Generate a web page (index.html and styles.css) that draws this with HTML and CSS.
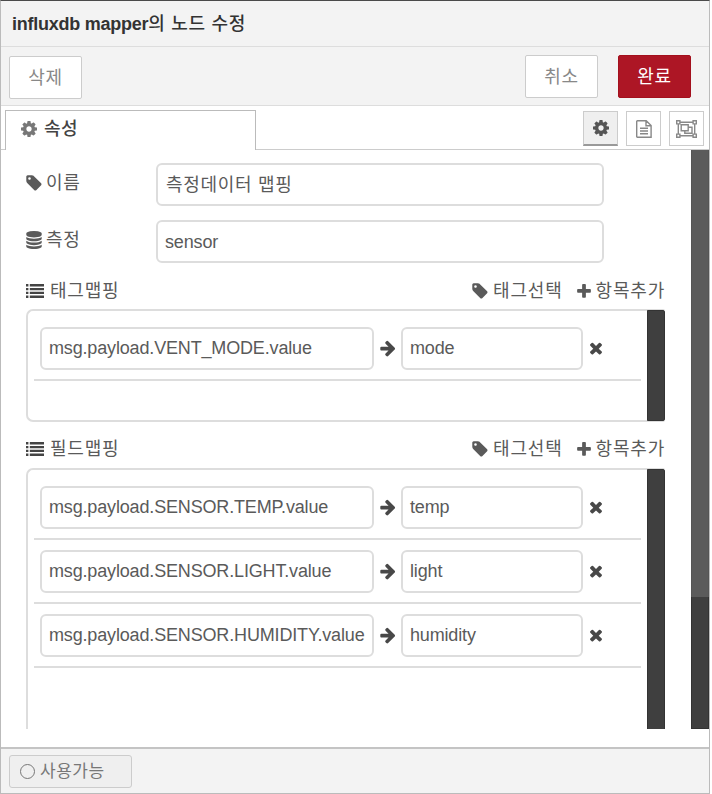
FILE: index.html
```
<!DOCTYPE html>
<html lang="ko">
<head>
<meta charset="utf-8">
<title>influxdb mapper</title>
<link rel="stylesheet" href="styles.css">
</head>
<body>
<svg class="defs" aria-hidden="true">
<symbol id="tag" viewBox="0 0 1792 1792"><path d="M576 448q0-53-37.500-90.500t-90.500-37.500-90.500 37.500-37.500 90.500 37.500 90.500 90.500 37.500 90.500-37.500 37.500-90.500zm1067 576q0 53-37 90l-491 492q-39 37-91 37-53 0-90-37l-715-716q-38-37-64.500-101t-26.500-117v-416q0-52 38-90t90-38h416q53 0 117 26.500t102 64.500l715 714q37 39 37 91z"/></symbol>
<symbol id="database" viewBox="128 0 1536 1792"><path d="M896 768q237 0 443-43t325-127v170q0 69-103 128t-280 93.500-385 34.500-385-34.500-280-93.500-103-128v-170q119 84 325 127t443 43zm0 768q237 0 443-43t325-127v170q0 69-103 128t-280 93.500-385 34.500-385-34.500-280-93.500-103-128v-170q119 84 325 127t443 43zm0-384q237 0 443-43t325-127v170q0 69-103 128t-280 93.500-385 34.500-385-34.500-280-93.500-103-128v-170q119 84 325 127t443 43zm0-1152q208 0 385 34.500t280 93.500 103 128v128q0 69-103 128t-280 93.500-385 34.500-385-34.500-280-93.500-103-128v-128q0-69 103-128t280-93.500 385-34.500z"/></symbol>
<symbol id="cog" viewBox="128 128 1536 1536"><path d="M1152 896q0-106-75-181t-181-75-181 75-75 181 75 181 181 75 181-75 75-181zm512-109v222q0 12-8 23t-20 13l-185 28q-19 54-39 91 35 50 107 138 10 12 10 25t-9 23q-27 37-99 108t-94 71q-12 0-26-9l-138-108q-44 23-91 38-16 136-29 186-7 28-36 28h-222q-14 0-24.500-8.500t-11.500-21.500l-28-184q-49-16-90-37l-141 107q-10 9-25 9-14 0-25-11-126-114-165-168-7-10-7-23 0-12 8-23 15-21 51-66.500t54-70.500q-27-50-41-99l-183-27q-13-2-21-12.500t-8-23.500v-222q0-12 8-23t19-13l186-28q14-46 39-92-40-57-107-138-10-12-10-24 0-10 9-23 26-36 98.500-107.500t94.500-71.500q13 0 26 10l138 107q44-23 91-38 16-136 29-186 7-28 36-28h222q14 0 24.500 8.500t11.500 21.500l28 184q49 16 90 37l142-107q9-9 24-9 13 0 25 10 129 119 165 170 7 8 7 22 0 12-8 23-15 21-51 66.500t-54 70.500q26 50 41 98l183 28q13 2 21 12.500t8 23.500z"/></symbol>
<symbol id="arrow" viewBox="0 0 1792 1792"><path d="M1600 960q0 54-37 91l-651 651q-39 37-91 37-51 0-90-37l-75-75q-38-38-38-91t38-91l293-293h-704q-52 0-84.500-37.500t-32.500-90.500v-128q0-53 32.500-90.500t84.500-37.500h704l-293-294q-38-36-38-90t38-90l75-75q38-38 90-38 53 0 91 38l651 651q37 35 37 90z"/></symbol>
<symbol id="times" viewBox="0 0 1792 1792"><path d="M1490 1322q0 40-28 68l-136 136q-28 28-68 28t-68-28l-294-294-294 294q-28 28-68 28t-68-28l-136-136q-28-28-28-68t28-68l294-294-294-294q-28-28-28-68t28-68l136-136q28-28 68-28t68 28l294 294 294-294q28-28 68-28t68 28l136 136q28 28 28 68t-28 68l-294 294 294 294q28 28 28 68z"/></symbol>
<symbol id="plus" viewBox="192 128 1408 1536"><path d="M1600 736v192q0 40-28 68t-68 28h-416v416q0 40-28 68t-68 28h-192q-40 0-68-28t-28-68v-416h-416q-40 0-68-28t-28-68v-192q0-40 28-68t68-28h416v-416q0-40 28-68t68-28h192q40 0 68 28t28 68v416h416q40 0 68 28t28 68z"/></symbol>
<symbol id="list" viewBox="0 0 18 14"><path d="M0 0h2.400v2.400H0zM0 3.900h2.400v2.400H0zM0 7.700h2.400v2.400H0zM0 11.500h2.400v2.400H0zM3.800 0H18v2.400H3.800zM3.800 3.900H18v2.400H3.800zM3.800 7.700H18v2.400H3.800zM3.800 11.500H18v2.400H3.800z"/></symbol>
<symbol id="doc" viewBox="0 0 16 18"><path d="M1.400.7h8.800l4.900 4.900v11.600H1.400a.7.7 0 0 1-.7-.7V1.400a.7.7 0 0 1 .7-.7zM10 .7v5h5M4 8.300h8M4 11h8M4 13.700h8" fill="none" stroke="currentColor" stroke-width="1.400"/></symbol>
<symbol id="group" viewBox="0 0 21 18"><g fill="none" stroke="currentColor" stroke-width="1.400"><path d="M4 2.300h13M4 15.700h13M2.300 4v10M18.700 4v10M.7.7h3.200v3.200H.7zM17.100.7h3.200v3.200h-3.200zM.7 14.100h3.200v3.200H.7zM17.100 14.100h3.200v3.200h-3.200zM5.200 4.700h7v6h-7zM12.200 7.300h3.800v6H8.800v-2.600"/></g></symbol>
</svg>
<div class="editor">
  <header class="title"><b>influxdb mapper</b><span>의 노드 수정</span></header>
  <div class="toolbar">
    <button class="btn delete">삭제</button>
    <button class="btn cancel">취소</button>
    <button class="btn primary">완료</button>
  </div>
  <nav class="tabs">
    <div class="tab"><svg class="cog"><use href="#cog"/></svg><span>속성</span></div>
    <div class="tools">
      <button class="tool active"><svg class="cog"><use href="#cog"/></svg></button>
      <button class="tool"><svg class="doc"><use href="#doc"/></svg></button>
      <button class="tool"><svg class="group"><use href="#group"/></svg></button>
    </div>
  </nav>
  <main class="body">
    <div class="form">
      <div class="row"><label><svg class="tag"><use href="#tag"/></svg>이름</label><div class="input name">측정데이터 맵핑</div></div>
      <div class="row"><label><svg class="db"><use href="#database"/></svg>측정</label><div class="input">sensor</div></div>
      <div class="section">
        <svg class="list-icon"><use href="#list"/></svg><span>태그맵핑</span>
        <a class="pick"><svg class="tag"><use href="#tag"/></svg>태그선택</a>
        <a><svg class="plus"><use href="#plus"/></svg>항목추가</a>
      </div>
      <div class="list tags">
        <div class="items">
          <div class="item"><div class="input key">msg.payload.VENT_MODE.value</div><svg class="arrow"><use href="#arrow"/></svg><div class="input val">mode</div><svg class="times"><use href="#times"/></svg></div>
        </div>
        <div class="track"></div>
      </div>
      <div class="section second">
        <svg class="list-icon"><use href="#list"/></svg><span>필드맵핑</span>
        <a class="pick"><svg class="tag"><use href="#tag"/></svg>태그선택</a>
        <a><svg class="plus"><use href="#plus"/></svg>항목추가</a>
      </div>
      <div class="list fields">
        <div class="items">
          <div class="item"><div class="input key">msg.payload.SENSOR.TEMP.value</div><svg class="arrow"><use href="#arrow"/></svg><div class="input val">temp</div><svg class="times"><use href="#times"/></svg></div>
          <div class="item"><div class="input key">msg.payload.SENSOR.LIGHT.value</div><svg class="arrow"><use href="#arrow"/></svg><div class="input val">light</div><svg class="times"><use href="#times"/></svg></div>
          <div class="item"><div class="input key">msg.payload.SENSOR.HUMIDITY.value</div><svg class="arrow"><use href="#arrow"/></svg><div class="input val">humidity</div><svg class="times"><use href="#times"/></svg></div>
        </div>
        <div class="track"></div>
      </div>
    </div>
    <div class="scroll"><div class="thumb"></div></div>
  </main>
  <footer class="footer"><button class="state"><i></i>사용가능</button></footer>
</div>
</body>
</html>
```
FILE: styles.css
```
* { box-sizing: border-box; }
body {
  margin: 0;
  width: 712px;
  height: 794px;
  overflow: hidden;
  background: #fff;
  color: #5a5a5a;
  font: 18px/24px "Liberation Sans", "Noto Sans CJK KR", sans-serif;
}
svg { display: block; flex: none; fill: currentColor; }
.defs { display: none; }
button { font: inherit; padding: 0; margin: 0; }

.editor {
  display: flex;
  flex-direction: column;
  width: 710px;
  height: 794px;
  border: 1px solid #bbb;
  border-top-color: #4a4a4a;
  background: #fff;
}
.title {
  display: flex;
  align-items: center;
  height: 46px;
  padding-left: 11px;
  border-bottom: 1px solid #ddd;
  background: #f3f3f3;
  color: #333;
}
.title b { letter-spacing: -0.25px; }
.title span { font-weight: 500; letter-spacing: 0.7px; }

.toolbar {
  display: flex;
  align-items: flex-start;
  height: 59px;
  padding: 8px 18px 0 8px;
  border-bottom: 1px solid #ddd;
  background: #f3f3f3;
}
.btn {
  width: 73px;
  height: 43px;
  border: 1px solid #ccc;
  border-radius: 2px;
  background: #fff;
  color: #888;
  letter-spacing: 0.7px;
}
.delete { margin-top: 1px; }
.cancel { margin-left: auto; }
.primary { margin-left: 20px; border-color: #a3101d; background: #ad1625; color: #fff; }

.tabs {
  display: flex;
  justify-content: space-between;
  height: 44px;
  padding: 4px 4px 0;
  border-bottom: 1px solid #ccc;
}
.tab {
  display: flex;
  align-items: center;
  gap: 7px;
  width: 251px;
  height: 40px;
  padding: 0 0 3px 15px;
  border: 1px solid #bbb;
  border-bottom: 0;
  background: #fff;
  color: #777;
}
.tab span { color: #444; font-weight: 500; letter-spacing: 0.5px; }
.cog { width: 16px; height: 16px; }
.tools { display: flex; gap: 8px; padding: 1px 1px 0 0; }
.tool {
  display: flex;
  align-items: center;
  justify-content: center;
  width: 35px;
  height: 35px;
  border: 1px solid #ccc;
  background: #fff;
  color: #888;
}
.tool.active { border-bottom: 2px solid #999; background: #efefef; color: #555; }
.doc { width: 16px; height: 18px; }
.group { width: 21px; height: 18px; }

.body { display: flex; justify-content: space-between; height: 579px; overflow: hidden; }
.form { width: 664px; padding: 13px 0 0 25px; letter-spacing: 0.8px; }
.row { display: flex; height: 43px; margin-bottom: 14px; }
.row label { display: flex; gap: 3px; width: 130px; height: 40px; align-items: center; }
.tag { width: 18px; height: 18px; margin-left: -1px; }
.db { width: 16px; height: 18px; margin-right: 1px; }
.input {
  display: flex;
  align-items: center;
  width: 448px;
  height: 43px;
  padding-left: 7px;
  border: 2px solid #ddd;
  border-radius: 6px;
  background: #fff;
  white-space: nowrap;
  letter-spacing: -0.16px;
}
.row .name { padding: 1px 0 0 8px; letter-spacing: 0.7px; }
.section { display: flex; align-items: center; height: 30px; margin-top: -1px; }
.section.second { margin-top: 12px; margin-bottom: 4px; }
.list-icon { width: 18px; height: 14px; color: #444; }
.section span { margin-left: 6px; }
.section a { display: flex; align-items: center; gap: 5px; }
.section .pick { gap: 4px; margin-left: auto; margin-right: 14px; }
.plus { width: 14px; height: 15px; }
.list {
  display: flex;
  justify-content: space-between;
  width: 639px;
  border: 2px solid #ddd;
  border-right: 0;
  border-radius: 7px 2px 2px 7px;
}
.tags { height: 113px; margin-top: 3px; }
.fields { height: 300px; }
.items { width: 607px; margin-left: 6px; }
.item {
  display: flex;
  align-items: center;
  height: 64px;
  padding-left: 6px;
  border-bottom: 2px solid #ddd;
}
.item:first-child { height: 70px; padding-top: 6px; }
.key { width: 334px; }
.val { width: 182px; }
.item svg { color: #484848; }
.arrow { width: 18px; height: 18px; margin: 0 4px 0 5px; }
.times { width: 18px; height: 18px; margin-left: 4px; }
.track { width: 18px; margin: -1px 0; background: #3f3f3f; border: 1px solid #333; border-radius: 0 2px 2px 0; }
.scroll { width: 18px; background: #3f3f3f; border: 1px solid #333; }
.thumb { height: 447px; margin: -1px; background: #5b5b5b; border: solid #555; border-width: 0 1px; }

.footer {
  display: flex;
  align-items: flex-start;
  height: 46px;
  margin-top: auto;
  padding: 6px 0 0 8px;
  border-top: 2px solid #c4c4c4;
  background: #f3f3f3;
}
.state {
  display: flex;
  align-items: center;
  gap: 5px;
  width: 123px;
  height: 33px;
  padding-left: 10px;
  border: 1px solid #ccc;
  border-radius: 3px;
  background: #efefef;
  color: #777;
  font-size: 17px;
  letter-spacing: 0.5px;
}
.state i { width: 15px; height: 15px; border: 1.5px solid #777; border-radius: 50%; }
```
